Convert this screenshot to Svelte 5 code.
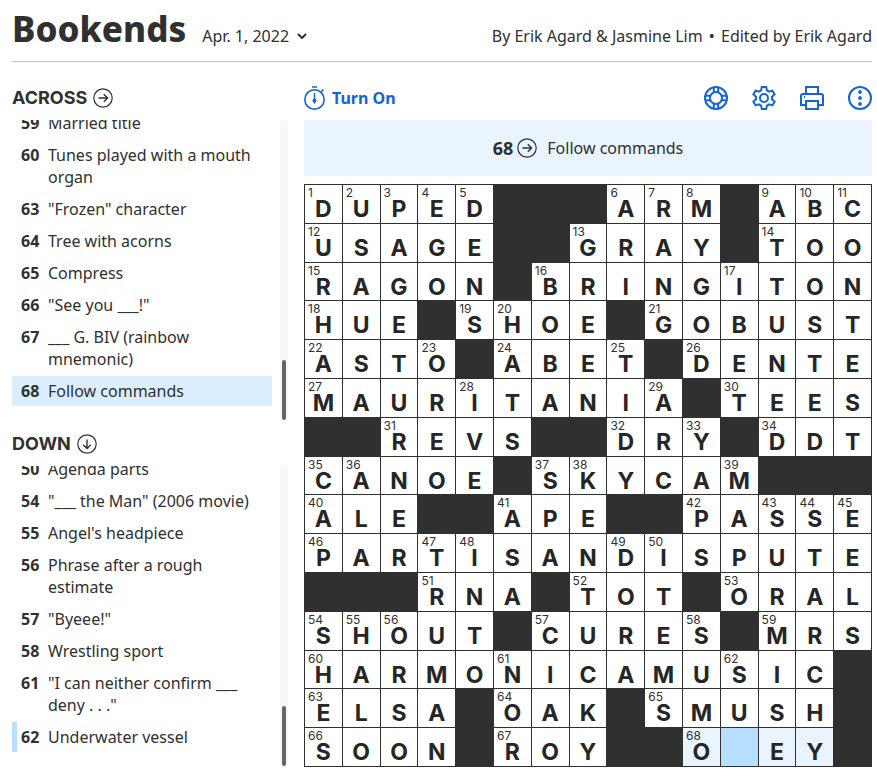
<script>
  import { onMount } from 'svelte';

  const rows = [
    'DUPED###ARM#ABC',
    'USAGE##GRAY#TOO',
    'RAGON#BRINGITON',
    'HUE#SHOE#GOBUST',
    'ASTO#ABET#DENTE',
    'MAURITANIA#TEES',
    '##REVS##DRY#DDT',
    'CANOE#SKYCAM###',
    'ALE##APE##PASSE',
    'PARTISANDISPUTE',
    '###RNA#TOT#ORAL',
    'SHOUT#CURES#MRS',
    'HARMONICAMUSIC#',
    'ELSA#OAK#SMUSH#',
    'SOON#ROY##O EY#'
  ];

  const isBlack = (r, c) => (rows[r]?.[c] ?? '#') === '#';

  function buildCells() {
    const list = [];
    let count = 0;
    for (let r = 0; r < rows.length; r++) {
      for (let c = 0; c < rows[r].length; c++) {
        const black = isBlack(r, c);
        const startsAcross = !black && isBlack(r, c - 1) && !isBlack(r, c + 1);
        const startsDown = !black && isBlack(r - 1, c) && !isBlack(r + 1, c);
        list.push({
          row: r,
          col: c,
          black,
          letter: black ? '' : rows[r][c].trim(),
          number: startsAcross || startsDown ? ++count : null
        });
      }
    }
    return list;
  }

  let cells = $state(buildCells());
  let selected = $state({ row: 14, col: 11 });

  const inWord = (cell) => {
    if (cell.black || cell.row !== selected.row) return false;
    const from = Math.min(cell.col, selected.col);
    const to = Math.max(cell.col, selected.col);
    return !rows[cell.row].slice(from, to).includes('#');
  };

  const lists = [
    {
      title: 'Across',
      arrow: 'M5.5 10h9M10.8 6.2l3.8 3.8-3.8 3.8',
      clues: [
        { n: 59, text: 'Married title' },
        { n: 60, text: 'Tunes played with a mouth organ' },
        { n: 63, text: '"Frozen" character' },
        { n: 64, text: 'Tree with acorns' },
        { n: 65, text: 'Compress' },
        { n: 66, text: '"See you ___!"' },
        { n: 67, text: '___ G. BIV (rainbow mnemonic)' },
        { n: 68, text: 'Follow commands', state: 'active' }
      ]
    },
    {
      title: 'Down',
      arrow: 'M10 5.5v9M6.2 10.8l3.8 3.8 3.8-3.8',
      clues: [
        { n: 50, text: 'Agenda parts' },
        { n: 54, text: '"___ the Man" (2006 movie)' },
        { n: 55, text: "Angel's headpiece" },
        { n: 56, text: 'Phrase after a rough estimate' },
        { n: 57, text: '"Byeee!"' },
        { n: 58, text: 'Wrestling sport' },
        { n: 61, text: '"I can neither confirm ___ deny . . ."' },
        { n: 62, text: 'Underwater vessel', state: 'crossing' }
      ]
    }
  ];

  let scrollers = $state([]);

  onMount(() => {
    scrollers.forEach((el) => (el.scrollTop = el.scrollHeight));
  });
</script>

{#snippet arrowIcon(d)}
  <svg class="arrow" viewBox="0 0 20 20" aria-hidden="true">
    <circle cx="10" cy="10" r="9.2" stroke-width="1.2" />
    <path {d} stroke-width="1.4" />
  </svg>
{/snippet}

<div class="page">
  <header>
    <h1>Bookends</h1>
    <button class="date">
      Apr. 1, 2022
      <svg viewBox="0 0 10 6" aria-hidden="true"><path d="M1 1l4 4 4-4" /></svg>
    </button>
    <p class="byline">By Erik Agard &amp; Jasmine Lim <span class="dot">•</span> Edited by Erik Agard</p>
  </header>

  <main>
    <aside>
      {#each lists as list, i}
        <section class="clues">
          <h2>{list.title} {@render arrowIcon(list.arrow)}</h2>
          <div class="clue-box">
            <ol bind:this={scrollers[i]}>
              {#each list.clues as clue}
                <li>
                  <button class="clue {clue.state ?? ''}">
                    <b>{clue.n}</b>
                    <span>{clue.text}</span>
                  </button>
                </li>
              {/each}
            </ol>
            <div class="track"><div class="thumb"></div></div>
          </div>
        </section>
      {/each}
    </aside>

    <div class="board">
      <div class="toolbar">
        <button class="timer">
          <svg viewBox="0 0 22 24" aria-hidden="true">
            <circle cx="10.5" cy="13.5" r="9.7" stroke-width="1.6" />
            <path d="M8 1h5M17.2 5.800l2.200-2.200" stroke-width="1.6" />
            <path d="M10.5 7v7" stroke-width="1.4" />
            <circle class="solid" cx="10.5" cy="14.5" r="2" />
            <path class="solid" d="M9 15.500h3l-1.500 2.500z" />
          </svg>
          Turn On
        </button>
        <button aria-label="Help">
          <svg viewBox="0 0 24 24" aria-hidden="true">
            <circle cx="12" cy="12" r="11" />
            <circle cx="12" cy="12" r="6" />
            <path d="M9.8 1.2v5.2M14.2 1.2v5.2M9.8 17.6v5.2M14.2 17.6v5.2M1.2 9.8h5.2M1.2 14.2h5.2M17.6 9.8h5.2M17.6 14.2h5.2" />
          </svg>
        </button>
        <button aria-label="Settings">
          <svg viewBox="0 0 24 24" aria-hidden="true">
            <circle cx="12" cy="12" r="4" />
            <path d="M9.8 1h4.4l.7 3.4 2.2 1.3 3.3-1.1 2.2 3.8L20 10.7v2.6l2.6 2.3-2.2 3.8-3.3-1.1-2.2 1.3-.7 3.4H9.8l-.7-3.4-2.2-1.3-3.3 1.1-2.2-3.8L4 13.3v-2.6L1.4 8.4l2.2-3.8 3.3 1.1 2.2-1.3z" />
          </svg>
        </button>
        <button aria-label="Print">
          <svg viewBox="0 0 24 24" aria-hidden="true">
            <path d="M6 8V1h12v7M6 19H1V10a2 2 0 0 1 2-2h18a2 2 0 0 1 2 2v9h-5" />
            <path d="M7 15h11v8H6v-8z" />
            <path d="M4 11h1" />
          </svg>
        </button>
        <button aria-label="More">
          <svg viewBox="0 0 24 24" aria-hidden="true">
            <circle cx="12" cy="12" r="11" />
            <g class="solid">
              <circle cx="12" cy="6" r="1.9" />
              <circle cx="12" cy="12" r="1.9" />
              <circle cx="12" cy="18" r="1.9" />
            </g>
          </svg>
        </button>
      </div>

      <div class="current">
        <b>68</b>
        {@render arrowIcon(lists[0].arrow)}
        <span>Follow commands</span>
      </div>

      <div class="grid">
        {#each cells as cell}
          {#if cell.black}
            <div class="black"></div>
          {:else}
            <label
              class="cell"
              class:word={inWord(cell)}
              class:selected={cell.row === selected.row && cell.col === selected.col}
            >
              {#if cell.number}<small>{cell.number}</small>{/if}
              <input
                maxlength="1"
                aria-label="Row {cell.row + 1}, column {cell.col + 1}"
                bind:value={cell.letter}
                onfocus={() => (selected = { row: cell.row, col: cell.col })}
              />
            </label>
          {/if}
        {/each}
      </div>
    </div>
  </main>
</div>

<style>
  :global(body) {
    background: #fff;
  }

  .page {
    box-sizing: border-box;
    display: flex;
    flex-direction: column;
    height: 100vh;
    min-height: 600px;
    padding: 0 5px 8px 12px;
    color: #303030;
    font: 16px/22px "Noto Sans", "Open Sans", sans-serif;
  }

  button {
    padding: 0;
    border: 0;
    background: none;
    color: inherit;
    font: inherit;
    cursor: pointer;
  }

  svg {
    display: block;
    fill: none;
    stroke: currentColor;
    stroke-width: 2;
  }

  .solid {
    fill: currentColor;
    stroke: none;
  }

  header {
    display: flex;
    align-items: baseline;
    flex: none;
    height: 61px;
    border-bottom: 1px solid #c0c0c0;
  }

  h1 {
    margin: 0 16px 0 0;
    font-size: 35px;
    font-weight: 800;
    line-height: 58px;
  }

  .date {
    display: flex;
    align-items: center;
    gap: 8px;
  }

  .date svg {
    width: 10px;
    height: 6px;
  }

  .byline {
    margin: 0 0 0 auto;
  }

  .dot {
    margin: 0 2px;
  }

  main {
    display: flex;
    flex: 1;
    gap: 16px;
    min-height: 0;
    padding-top: 13px;
  }

  aside {
    display: flex;
    flex-direction: column;
    flex: none;
    width: 276px;
  }

  .clues {
    display: flex;
    flex: 1;
    flex-direction: column;
    min-height: 0;
  }

  h2 {
    display: flex;
    align-items: center;
    flex: none;
    gap: 6px;
    height: 45px;
    margin: 0;
    font-family: Inter, "Noto Sans", sans-serif;
    font-size: 18px;
    text-transform: uppercase;
  }

  .arrow {
    flex: none;
    width: 20px;
    height: 20px;
  }

  .clue-box {
    display: flex;
    flex: 1;
    gap: 8px;
    min-height: 0;
  }

  ol {
    box-sizing: border-box;
    flex: 1;
    margin: 0;
    padding: 0 0 13px;
    overflow-y: auto;
    list-style: none;
    scrollbar-width: none;
  }

  li {
    margin-bottom: 2px;
  }

  .clue {
    display: flex;
    gap: 9px;
    box-sizing: border-box;
    width: 100%;
    padding: 4px 8px 4px 4px;
    border-left: 5px solid transparent;
    text-align: left;
  }

  .clue b {
    flex: none;
    width: 18px;
  }

  .clue.active {
    border-color: #dbeeff;
    background: #dbeeff;
  }

  .clue.crossing {
    border-color: #b8dfff;
  }

  .track {
    display: flex;
    flex-direction: column;
    justify-content: flex-end;
    box-sizing: border-box;
    width: 8px;
    padding: 1px 2px;
    border-radius: 4px;
    background: #f8f8f8;
  }

  .thumb {
    height: 20%;
    border-radius: 2px;
    background: #666;
  }

  .board {
    display: flex;
    flex: 1;
    flex-direction: column;
    min-width: 0;
    min-height: 0;
  }

  .toolbar {
    display: flex;
    align-items: center;
    flex: none;
    gap: 24px;
    height: 45px;
    color: #1665cf;
  }

  .toolbar svg {
    width: 24px;
    height: 24px;
  }

  .toolbar .timer {
    display: flex;
    align-items: center;
    gap: 6px;
    margin-right: auto;
    font-weight: 700;
  }

  .toolbar .timer svg {
    width: 22px;
  }

  .current {
    display: flex;
    align-items: center;
    justify-content: center;
    flex: none;
    height: 56px;
    margin-bottom: 8px;
    background: #e9f4ff;
  }

  .current b {
    margin-right: 4px;
    font-size: 18px;
  }

  .current span {
    margin-left: 10px;
  }

  .grid {
    display: grid;
    grid-template-columns: repeat(15, minmax(0, 1fr));
    grid-template-rows: repeat(15, minmax(0, 1fr));
    flex: 1;
    gap: 1px;
    min-height: 0;
    padding: 1px;
    background: #303030;
    font-family: Inter, "Noto Sans", sans-serif;
  }

  .cell {
    position: relative;
    background: #fff;
  }

  .cell.word {
    background: #e9f4ff;
  }

  .cell.selected {
    background: #b8dfff;
  }

  .cell small {
    position: absolute;
    top: 2px;
    left: 3px;
    font-size: 12px;
    line-height: 12px;
  }

  .cell input {
    box-sizing: border-box;
    display: block;
    width: 100%;
    height: 100%;
    padding: 10px 0 0;
    border: 0;
    outline: 0;
    background: none;
    color: #262626;
    font-family: inherit;
    font-size: 23px;
    font-weight: 700;
    line-height: 26px;
    text-align: center;
    text-transform: uppercase;
  }
</style>
